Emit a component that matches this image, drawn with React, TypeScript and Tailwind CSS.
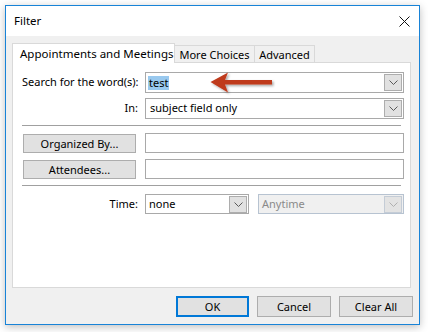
import React from "react";

const font = { fontFamily: '"Noto Sans", "Open Sans", sans-serif' };

function Chevron({ color = "#5a5a5a" }: { color?: string }) {
  return (
    <svg width="9" height="5" viewBox="0 0 9 5" fill="none">
      <path d="M0.5 0.5 L4.5 4.5 L8.5 0.5" stroke={color} strokeWidth="1" />
    </svg>
  );
}

function DropBox({ disabled = false }: { disabled?: boolean }) {
  return (
    <div
      className={
        "mr-px flex h-[17px] w-[18px] items-center justify-center border " +
        (disabled ? "border-[#c4ccd6] bg-[#e3e3e3]" : "border-[#adadad] bg-[#e1e1e1]")
      }
    >
      <Chevron color={disabled ? "#b0b0b0" : "#5a5a5a"} />
    </div>
  );
}

export default function App() {
  return (
    <div className="h-[332px] w-[428px] bg-white pl-[5px] pt-[5px] text-[11px] text-black" style={font}>
      <div className="relative flex h-[320px] w-[415px] flex-col border border-[#1883d7] shadow-[0_2px_8px_rgba(0,0,0,0.25)]">
        {/* Title bar */}
        <div className="flex h-[30px] items-center justify-between bg-white pl-[8px] pr-[9px]">
          <span className="text-[11.5px] leading-none">Filter</span>
          <svg width="11" height="11" viewBox="0 0 11 11">
            <path d="M0.5 0.5 L10.5 10.5 M10.5 0.5 L0.5 10.5" stroke="#111" strokeWidth="1" />
          </svg>
        </div>
        {/* Body */}
        <div className="flex flex-1 flex-col bg-[#f0f0f0] px-[6px] pt-[7px]">
          {/* Tabs */}
          <div className="flex h-[19px] items-end whitespace-nowrap">
            <div className="relative z-10 -mb-px flex h-[20px] w-[163px] items-center border border-b-0 border-[#d9d9d9] bg-white pl-[7px] text-[11.5px] leading-none">
              Appointments and Meetings
            </div>
            <div className="flex h-[17px] w-[80px] items-center justify-center border border-b-0 border-l-0 border-[#d9d9d9] bg-[#f0f0f0] leading-none">
              More Choices
            </div>
            <div className="flex h-[17px] w-[60px] items-center justify-center border border-b-0 border-l-0 border-[#d9d9d9] bg-[#f0f0f0] leading-none">
              Advanced
            </div>
          </div>
          {/* Panel */}
          <div className="flex h-[226px] w-[399px] flex-col border border-[#d9d9d9] bg-white pl-[9px] pt-[9px]">
            <div className="flex h-[21px] items-center">
              <div className="w-[117px] whitespace-nowrap pr-px text-right">Search for the word(s):</div>
              <div className="ml-[6px] flex h-[21px] w-[259px] items-center justify-between border border-[#a9a9a9] bg-white pl-[2px]">
                <span className="bg-[#99c9ef] px-px leading-[14px]">test</span>
                <DropBox />
              </div>
            </div>
            <div className="mt-[5px] flex h-[21px] items-center">
              <div className="w-[117px] whitespace-nowrap pr-px text-right">In:</div>
              <div className="ml-[6px] flex h-[21px] w-[259px] items-center justify-between border border-[#a9a9a9] bg-white pl-[4px]">
                <span>subject field only</span>
                <DropBox />
              </div>
            </div>
            <div className="mt-[6px] h-px w-[379px] bg-[#a0a0a0]" />
            <div className="mt-[7px] flex h-[20px] items-center">
              <button className="ml-px flex h-[19px] w-[113px] items-center justify-center border border-[#adadad] bg-[#e1e1e1] leading-none">
                Organized By...
              </button>
              <div className="ml-[9px] h-[20px] w-[259px] border border-[#a9a9a9] bg-white" />
            </div>
            <div className="mt-[6px] flex h-[20px] items-center">
              <button className="ml-px flex h-[19px] w-[113px] items-center justify-center border border-[#adadad] bg-[#e1e1e1] leading-none">
                Attendees...
              </button>
              <div className="ml-[9px] h-[20px] w-[259px] border border-[#a9a9a9] bg-white" />
            </div>
            <div className="mt-[6px] h-px w-[379px] bg-[#a0a0a0]" />
            <div className="mt-[8px] flex h-[20px] items-center">
              <div className="w-[117px] whitespace-nowrap pr-px text-right">Time:</div>
              <div className="ml-[6px] flex h-[20px] w-[104px] items-center justify-between border border-[#a9a9a9] bg-white pl-[3px]">
                <span>none</span>
                <DropBox />
              </div>
              <div className="ml-[9px] flex h-[20px] w-[146px] items-center justify-between border border-[#b7c3d1] bg-[#f0f0f0] pl-[3px] text-[#8a8a8a]">
                <span>Anytime</span>
                <DropBox disabled />
              </div>
            </div>
          </div>
          {/* Buttons */}
          <div className="mt-[8px] flex justify-end gap-[8px]">
            <button className="flex h-[21px] w-[73px] items-center justify-center border-2 border-[#0078d7] bg-[#e1e1e1] leading-none">
              OK
            </button>
            <button className="flex h-[21px] w-[74px] items-center justify-center border border-[#adadad] bg-[#e1e1e1] leading-none">
              Cancel
            </button>
            <button className="flex h-[21px] w-[74px] items-center justify-center border border-[#adadad] bg-[#e1e1e1] leading-none">
              Clear All
            </button>
          </div>
        </div>
        {/* Annotation arrow */}
        <svg
          className="absolute left-[200px] top-[63px]"
          width="72"
          height="34"
          viewBox="0 0 72 34"
        >
          <defs>
            <filter id="sh" x="-20%" y="-40%" width="140%" height="180%">
              <feDropShadow dx="1.5" dy="1.5" stdDeviation="1.2" floodColor="#000" floodOpacity="0.35" />
            </filter>
          </defs>
          <path
            d="M4.5 13 L22 3.5 L19 11 L66 11 L66 15.5 L19 15.5 L22 23.5 Z"
            fill="#bf3a1c"
            filter="url(#sh)"
          />
        </svg>
      </div>
    </div>
  );
}
